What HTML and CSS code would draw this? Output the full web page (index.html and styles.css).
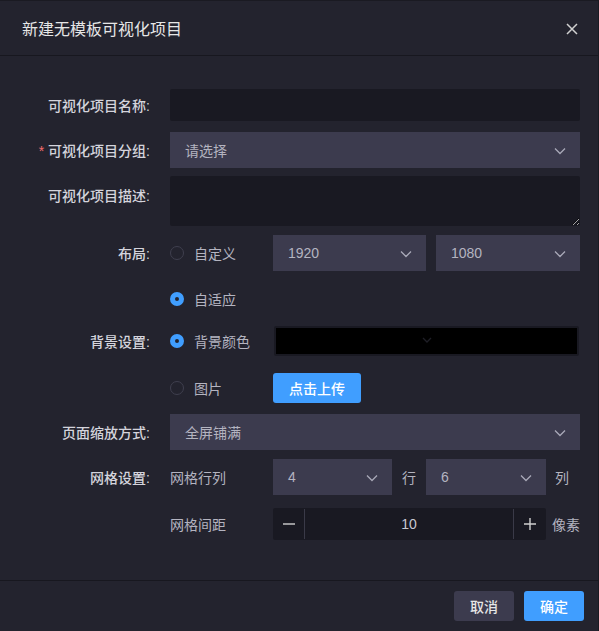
FILE: index.html
```html
<!DOCTYPE html>
<html lang="zh-CN">
<head>
    <meta charset="UTF-8">
    <meta name="viewport" content="width=device-width, initial-scale=1.0">
    <title>新建无模板可视化项目</title>
    <link rel="stylesheet" href="styles.css">
</head>
<body>
    <div class="dialog">
        <div class="dialog-header">
            <span class="dialog-title">新建无模板可视化项目</span>
            <svg class="close" width="12" height="12" viewBox="0 0 12 12">
                <path d="M1 1L11 11M11 1L1 11" stroke="#d0d0d0" stroke-width="1.5" fill="none"/>
            </svg>
        </div>

        <div class="dialog-body">
            <div class="form-item row-name">
                <label class="form-label">可视化项目名称:</label>
                <div class="form-content">
                    <input class="input" type="text">
                </div>
            </div>

            <div class="form-item row-group">
                <label class="form-label"><span class="required">*</span>可视化项目分组:</label>
                <div class="form-content">
                    <div class="select full">
                        <span class="placeholder">请选择</span>
                        <svg class="arrow" width="12" height="8" viewBox="0 0 12 8"><path d="M1 1.5L6 6.5L11 1.5" stroke="#a9a9b8" stroke-width="1.3" fill="none"/></svg>
                    </div>
                </div>
            </div>

            <div class="form-item row-desc">
                <label class="form-label">可视化项目描述:</label>
                <div class="form-content">
                    <textarea class="textarea"></textarea>
                </div>
            </div>

            <div class="form-item row-layout">
                <label class="form-label">布局:</label>
                <div class="form-content">
                    <div class="radio"><span class="radio-dot"></span>自定义</div>
                    <div class="select w-1920">
                        <span class="value">1920</span>
                        <svg class="arrow" width="12" height="8" viewBox="0 0 12 8"><path d="M1 1.5L6 6.5L11 1.5" stroke="#a9a9b8" stroke-width="1.3" fill="none"/></svg>
                    </div>
                    <div class="select w-1080">
                        <span class="value">1080</span>
                        <svg class="arrow" width="12" height="8" viewBox="0 0 12 8"><path d="M1 1.5L6 6.5L11 1.5" stroke="#a9a9b8" stroke-width="1.3" fill="none"/></svg>
                    </div>
                </div>
            </div>

            <div class="form-item row-auto">
                <label class="form-label"></label>
                <div class="form-content">
                    <div class="radio checked"><span class="radio-dot"></span>自适应</div>
                </div>
            </div>

            <div class="form-item row-bg">
                <label class="form-label">背景设置:</label>
                <div class="form-content">
                    <div class="radio checked"><span class="radio-dot"></span>背景颜色</div>
                    <div class="color-picker">
                        <div class="color-box">
                            <svg width="10" height="6" viewBox="0 0 10 6"><path d="M1 1L5 5L9 1" stroke="#1e1e26" stroke-width="1.3" fill="none"/></svg>
                        </div>
                    </div>
                </div>
            </div>

            <div class="form-item row-img">
                <label class="form-label"></label>
                <div class="form-content">
                    <div class="radio"><span class="radio-dot"></span>图片</div>
                    <button class="btn btn-primary btn-upload">点击上传</button>
                </div>
            </div>

            <div class="form-item row-scale">
                <label class="form-label">页面缩放方式:</label>
                <div class="form-content">
                    <div class="select full">
                        <span class="value">全屏铺满</span>
                        <svg class="arrow" width="12" height="8" viewBox="0 0 12 8"><path d="M1 1.5L6 6.5L11 1.5" stroke="#a9a9b8" stroke-width="1.3" fill="none"/></svg>
                    </div>
                </div>
            </div>

            <div class="form-item row-grid">
                <label class="form-label">网格设置:</label>
                <div class="form-content">
                    <span class="sub-label">网格行列</span>
                    <div class="select w-row">
                        <span class="value">4</span>
                        <svg class="arrow" width="12" height="8" viewBox="0 0 12 8"><path d="M1 1.5L6 6.5L11 1.5" stroke="#a9a9b8" stroke-width="1.3" fill="none"/></svg>
                    </div>
                    <span class="unit unit-row">行</span>
                    <div class="select w-col">
                        <span class="value">6</span>
                        <svg class="arrow" width="12" height="8" viewBox="0 0 12 8"><path d="M1 1.5L6 6.5L11 1.5" stroke="#a9a9b8" stroke-width="1.3" fill="none"/></svg>
                    </div>
                    <span class="unit">列</span>
                </div>
            </div>

            <div class="form-item row-gap">
                <label class="form-label"></label>
                <div class="form-content">
                    <span class="sub-label">网格间距</span>
                    <div class="input-number">
                        <span class="num-btn minus">
                            <svg width="14" height="14" viewBox="0 0 14 14"><path d="M1 7H13" stroke="#d0d0d0" stroke-width="1.4"/></svg>
                        </span>
                        <span class="num-value">10</span>
                        <span class="num-btn plus">
                            <svg width="14" height="14" viewBox="0 0 14 14"><path d="M1 7H13M7 1V13" stroke="#d0d0d0" stroke-width="1.4"/></svg>
                        </span>
                    </div>
                    <span class="unit unit-px">像素</span>
                </div>
            </div>
        </div>

        <div class="dialog-footer">
            <button class="btn btn-default">取消</button>
            <button class="btn btn-primary">确定</button>
        </div>
    </div>
</body>
</html>
```

FILE: styles.css
```css
body {
    margin: 0;
    background-color: #23232e;
    font-family: "Liberation Sans", "Noto Sans CJK SC", sans-serif;
    font-size: 14px;
}
.dialog {
    width: 598px;
    height: 630px;
    background-color: #23232e;
    border-top: 1px solid #1a1a22;
    border-right: 1px solid #1a1a22;
}
.dialog-header {
    height: 54px;
    padding: 0 20px 0 22px;
    display: flex;
    align-items: center;
    justify-content: space-between;
    border-bottom: 1px solid #17171f;
}
.dialog-title {
    color: #e6e6e6;
    font-size: 16px;
}
.close {
    margin-top: 2px;
}
.dialog-body {
    padding: 33px 18px 0 0;
    height: 525px;
    box-sizing: border-box;
    border-bottom: 1px solid #17171f;
}
.form-item {
    display: flex;
    align-items: center;
}
.form-label {
    width: 170px;
    padding-right: 20px;
    text-align: right;
    color: #d4d4dc;
    font-weight: 500;
    box-sizing: border-box;
    flex-shrink: 0;
}
.required {
    color: #f56c6c;
    margin-right: 4px;
    font-weight: normal;
}
.form-content {
    width: 410px;
    display: flex;
    align-items: center;
}
.row-name { height: 32px; margin-bottom: 11px; }
.row-group { height: 36px; margin-bottom: 8px; }
.row-desc { height: 50px; margin-bottom: 9px; align-items: flex-start; }
.row-desc .form-label { padding-top: 9px; }
.row-layout { height: 36px; margin-bottom: 10px; }
.row-auto { height: 36px; margin-bottom: 6px; }
.row-bg { height: 36px; margin-bottom: 11px; }
.row-img { height: 36px; margin-bottom: 8px; }
.row-scale { height: 36px; margin-bottom: 9px; }
.row-grid { height: 36px; margin-bottom: 13px; }
.row-gap { height: 32px; }

.input {
    width: 100%;
    height: 32px;
    box-sizing: border-box;
    border: none;
    border-radius: 2px;
    background-color: #191922;
    outline: none;
}
.textarea {
    width: 100%;
    height: 50px;
    box-sizing: border-box;
    border: none;
    border-radius: 2px;
    background-color: #191922;
    outline: none;
    display: block;
    color-scheme: dark;
}
.select {
    height: 36px;
    box-sizing: border-box;
    background-color: #3c3b4e;
    display: flex;
    align-items: center;
    justify-content: space-between;
    padding: 0 14px 0 15px;
    color: #b4b4c0;
}
.select .value, .select .placeholder {
    color: #b4b4c0;
}
.select .arrow {
    margin-top: 1px;
}
.full { width: 100%; }
.w-1920 { width: 153px; margin-right: 10px; }
.w-1080 { width: 144px; }
.w-row { width: 119px; }
.w-col { width: 120px; }

.radio {
    display: flex;
    align-items: center;
    width: 103px;
    color: #b4b4c0;
    flex-shrink: 0;
}
.radio-dot {
    width: 14px;
    height: 14px;
    box-sizing: border-box;
    border: 1px solid #3f3f4e;
    border-radius: 50%;
    margin-right: 10px;
}
.radio.checked .radio-dot {
    border: 5px solid #409eff;
    background-color: #23232e;
}
.color-picker {
    width: 305px;
    height: 30px;
    box-sizing: border-box;
    padding: 2px;
    background-color: #191922;
    border-radius: 2px;
    margin-left: 1px;
}
.color-box {
    height: 100%;
    background-color: #000;
    display: flex;
    align-items: center;
    justify-content: center;
}
.color-box svg {
    margin-top: -2px;
}

.btn {
    height: 30px;
    width: 60px;
    border: none;
    border-radius: 3px;
    font-family: "Liberation Sans", "Noto Sans CJK SC", sans-serif;
    font-size: 14px;
    font-weight: 500;
    color: #fff;
    padding: 0;
    cursor: pointer;
}
.btn-primary {
    background-color: #409eff;
}
.btn-default {
    background-color: #3c3b4e;
    color: #e6e6e6;
}
.btn-upload {
    width: 88px;
}

.sub-label {
    width: 103px;
    color: #b4b4c0;
    flex-shrink: 0;
}
.unit {
    color: #b4b4c0;
    margin-left: 9px;
}
.unit-row {
    margin: 0 10px;
}
.unit-px {
    margin-left: 6px;
}
.input-number {
    width: 273px;
    height: 32px;
    background-color: #191922;
    border-radius: 2px;
    display: flex;
    align-items: center;
}
.num-btn {
    width: 32px;
    height: 100%;
    display: flex;
    align-items: center;
    justify-content: center;
    box-sizing: border-box;
}
.minus {
    border-right: 1px solid #3a3a48;
    height: 30px;
}
.plus {
    border-left: 1px solid #3a3a48;
    height: 30px;
    width: 33px;
}
.num-value {
    flex: 1;
    text-align: center;
    color: #c8c8d2;
}

.dialog-footer {
    display: flex;
    justify-content: flex-end;
    gap: 10px;
    padding: 10px 14px 0 0;
}
```
